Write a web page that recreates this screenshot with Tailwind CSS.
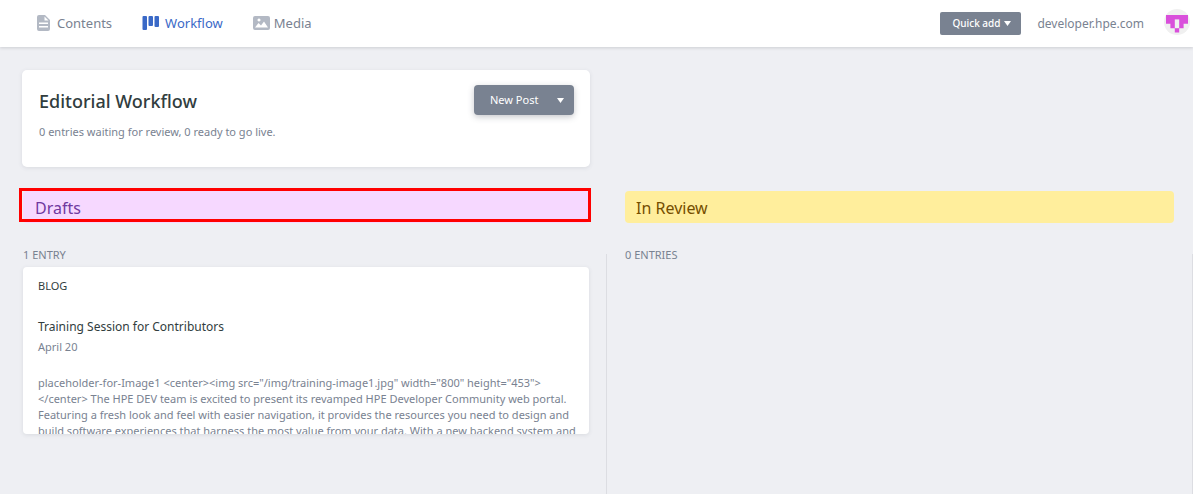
<!DOCTYPE html>
<html lang="en">
<head>
<meta charset="utf-8">
<title>Editorial Workflow</title>
<script src="https://cdn.jsdelivr.net/npm/@tailwindcss/browser@4"></script>
</head>
<body class="flex min-h-screen flex-col overflow-x-hidden bg-[#eeeff3] font-['Noto_Sans',sans-serif] text-xs text-[#798291]">
<header class="flex h-[47px] shrink-0 items-center justify-between bg-white pr-[3px] pl-9 shadow-[0_1px_3px_rgba(68,74,87,0.2)]">
  <nav class="flex gap-[30px] text-[13px]">
    <a href="#" class="flex items-center gap-1.5">
      <svg class="h-4 w-[15px] text-[#b3b9c4]" viewBox="0 0 15 16" fill="currentColor"><path fill-rule="evenodd" d="M3 0h6l5 5v9a2 2 0 0 1-2 2H3a2 2 0 0 1-2-2V2a2 2 0 0 1 2-2zm5.500 1.500v4h4zM3 7.500v1.500h9V7.500zM3 11v1.500h9V11z"/></svg>Contents</a>
    <a href="#" class="flex items-center gap-1.5 text-[#3a69c7]">
      <svg class="h-4 w-[17px]" viewBox="0 0 17 16" fill="currentColor"><rect x="0.500" y="1" width="4.500" height="14" rx="1"/><rect x="6.500" y="1" width="4.500" height="10" rx="1"/><rect x="12.500" y="1" width="4.500" height="11" rx="1"/></svg>Workflow</a>
    <a href="#" class="flex items-center gap-1">
      <svg class="h-4 w-[17px] text-[#b3b9c4]" viewBox="0 0 17 16" fill="currentColor"><path fill-rule="evenodd" d="M2 1h13a2 2 0 0 1 2 2v10a2 2 0 0 1-2 2H2a2 2 0 0 1-2-2V3a2 2 0 0 1 2-2zm4 2.500a1.500 1.500 0 1 0 .01 0zM2 12.500h13L11 6.500 8 10.500 5.500 8z"/></svg>Media</a>
  </nav>
  <div class="flex items-center gap-5">
    <div class="flex items-center gap-4">
      <button class="flex h-[23px] items-center gap-1 rounded-xs bg-[#798291] pr-2.5 pl-3 text-[10px] font-medium text-white">Quick add
        <svg class="h-[5px] w-[7px]" viewBox="0 0 7 5" fill="currentColor"><path d="M0 0h7L3.500 5z"/></svg></button>
      <a href="#">developer.hpe.com</a>
    </div>
    <svg class="-mt-1 size-[26px]" viewBox="0 0 26 26" role="img" aria-label="Account"><circle cx="13" cy="13" r="13" fill="#f0f0f0"/><path fill="#d94fdb" d="M2 6h22v8.800h-4.400v4.400h-4.400v4.400h-4.400v-4.400H6.400v-4.400H2z"/><path fill="#f0f0f0" d="M10.800 10.400h4.400v8.800h-4.400z"/></svg>
  </div>
</header>
<main class="flex grow flex-col pt-[23px]">
  <div class="grid grid-cols-[607fr_586fr]">
    <section class="mr-[17px] ml-[22px] flex h-[97px] items-start justify-between rounded-[5px] bg-white py-[15px] pr-4 pl-[17px] shadow-[0_1px_4px_rgba(68,74,87,0.12)]">
      <div>
        <h1 class="text-lg leading-8 font-medium text-[#313d3e]">Editorial Workflow</h1>
        <p class="mt-[7px] text-[11px] leading-4">0 entries waiting for review, 0 ready to go live.</p>
      </div>
      <button class="flex h-[30px] w-[100px] items-center justify-between rounded-[4px] bg-[#798291] pt-px pr-2.5 pl-4 text-[11px] text-white shadow-[0_2px_6px_rgba(68,74,87,0.3)]">New Post
        <svg class="h-[5px] w-[7px]" viewBox="0 0 7 5" fill="currentColor"><path d="M0 0h7L3.500 5z"/></svg></button>
    </section>
  </div>
  <div class="mt-6 grid grid-cols-[607fr_586fr]">
    <h2 class="relative mr-[18px] ml-[23px] h-8 rounded-[4px] bg-[#f6d8ff] px-3 text-base leading-[34px] text-[#70399f]">Drafts<span class="absolute -inset-x-1 -top-[3px] bottom-px -right-[2px] border-3 border-[#ff0000]"></span></h2>
    <h2 class="mr-[19px] ml-[18px] h-8 rounded-[4px] bg-[#ffee9c] px-[11px] text-base leading-[34px] text-[#754e00]">In Review</h2>
  </div>
  <div class="mt-[31px] grid grow grid-cols-[607fr_586fr]">
    <section class="border-r border-[#dcdde2] pr-[17px] pl-[23px]">
      <p class="-mt-[7px] mb-1 text-[11px] leading-4">1 ENTRY</p>
      <article class="h-[167px] overflow-hidden rounded-[4px] bg-white pt-2.5 pr-1 pl-[15px] shadow-[0_1px_4px_rgba(68,74,87,0.12)]">
        <p class="text-[11px] leading-[18px] text-[#313d3e]">BLOG</p>
        <h3 class="mt-[22px] text-xs leading-5 text-[#313d3e]">Training Session for Contributors</h3>
        <p class="mt-0.5 text-[11px] leading-4">April 20</p>
        <p class="mt-5 text-[11px] leading-4">placeholder-for-Image1 &lt;center&gt;&lt;img src="/img/training-image1.jpg" width="800" height="453"&gt;<br>&lt;/center&gt; The HPE DEV team is excited to present its revamped HPE Developer Community web portal.<br>Featuring a fresh look and feel with easier navigation, it provides the resources you need to design and<br>build software experiences that harness the most value from your data. With a new backend system and</p>
      </article>
    </section>
    <section class="border-r border-[#dcdde2] pl-[18px]">
      <p class="-mt-[7px] text-[11px] leading-4">0 ENTRIES</p>
    </section>
  </div>
</main>
</body>
</html>
